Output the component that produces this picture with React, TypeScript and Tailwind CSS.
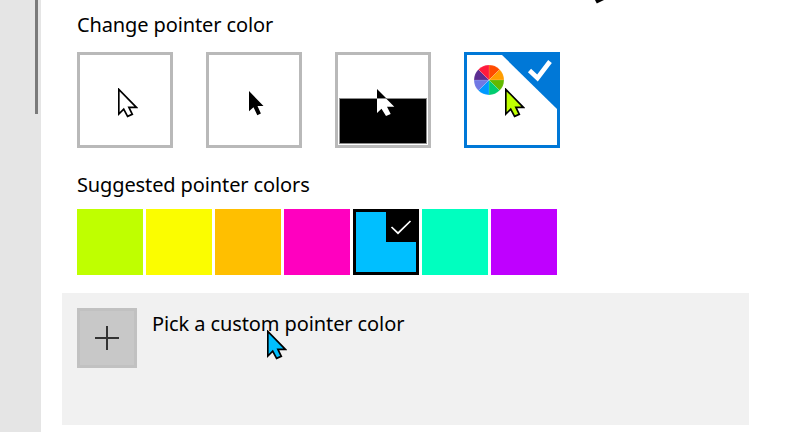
import React, { useState } from 'react';
import clsx from 'clsx';

const OUTLINE_POINTER = 'M.8 1.4V26L5.7 21.2 9.6 28.4 14.3 26.4 10.9 19.4H18.4Z';

const wheelColors = ['#ff4b00', '#ff9d00', '#62b900', '#00cc6f', '#0099ff', '#7078e4', '#5c2d91', '#ff1a3c'];

const swatches = [
  { name: 'Lime', color: 'bg-[#bfff00]' },
  { name: 'Yellow', color: 'bg-[#fbfd00]' },
  { name: 'Gold', color: 'bg-[#ffbf00]' },
  { name: 'Pink', color: 'bg-[#ff00bf]' },
  { name: 'Turquoise', color: 'bg-[#00bfff]' },
  { name: 'Green', color: 'bg-[#00ffbf]' },
  { name: 'Purple', color: 'bg-[#bf00ff]' },
];

interface PointerProps {
  fill: string;
  className?: string;
}

const Pointer: React.FC<PointerProps> = ({ fill, className }) => (
  <svg width="20" height="30" viewBox="0 0 20 30" className={className}>
    <path d={OUTLINE_POINTER} fill={fill} stroke="#000" strokeWidth={1.7} />
  </svg>
);

const ColorWheel = () => (
  <svg width="30" height="30" viewBox="-15 -15 30 30" className="absolute left-[7px] top-[10px]">
    {wheelColors.map((color, i) => (
      <path
        key={color}
        d="M0 0V-15A15 15 0 0 1 10.61 -10.61Z"
        fill={color}
        stroke="#fff"
        strokeOpacity={0.3}
        strokeWidth={0.4}
        transform={`rotate(${i * 45})`}
      />
    ))}
  </svg>
);

const modes = [
  {
    name: 'White',
    preview: <Pointer fill="#fff" className="absolute left-[38px] top-[33px]" />,
  },
  {
    name: 'Black',
    preview: (
      <svg width="16" height="26" viewBox="0 0 16 26" className="absolute left-[40px] top-[36px]">
        <path d="M0 0V20.3L4.5 16.3 8.3 24.2 11.9 22.6 8.5 15H14.5Z" />
      </svg>
    ),
  },
  {
    name: 'Inverted',
    preview: (
      <>
        <div className="absolute left-px top-[43px] h-[46px] w-[88px] border border-[#8c8c8c] bg-black" />
        <svg width="20" height="30" viewBox="0 0 20 30" className="absolute left-[39px] top-[34px]">
          <path d="M0 0V10H10Z" />
          <path d="M0 10V24L4.5 19.7 9 27 13.7 25 10 17.7H17.3L9.6 10Z" fill="#fff" />
          <path d="M0 9.5H9.5" stroke="#8c8c8c" />
        </svg>
      </>
    ),
  },
  {
    name: 'Custom',
    preview: (
      <>
        <ColorWheel />
        <svg width="55" height="54" viewBox="0 0 55 54" className="absolute right-0 top-0">
          <path d="M0 0H55V54Z" fill="#0078d7" />
          <path d="M27.5 15.5 35.5 23 48 6.5" fill="none" stroke="#fff" strokeWidth={4.6} />
        </svg>
        <Pointer fill="#bfff00" className="absolute left-[38px] top-[33px]" />
      </>
    ),
  },
];

export default function App() {
  const [mode, setMode] = useState('Custom');
  const [swatch, setSwatch] = useState('Turquoise');

  return (
    <div className="relative flex h-[432px] w-[796px] overflow-hidden bg-white font-['Noto_Sans','Open_Sans',sans-serif] text-[20px] leading-7 text-black">
      <aside className="flex w-[41px] shrink-0 justify-end bg-[#e5e5e5] pr-[3px]">
        <div className="h-[114px] w-[3px] bg-[#7a7a7a]" />
      </aside>

      <main className="flex-1 pl-[21px]">
        <section className="pl-[15px] pt-[11px]">
          <h2 className="h-7 whitespace-nowrap tracking-[-0.12px]">Change pointer color</h2>
          <div className="mt-[13px] flex gap-[33px]">
            {modes.map((item) => (
              <button
                key={item.name}
                aria-label={item.name}
                onClick={() => setMode(item.name)}
                className={clsx(
                  'relative size-24 border-3 bg-white',
                  mode === item.name ? 'border-[#0078d7]' : 'border-[#b9b9b9]'
                )}
              >
                {item.preview}
              </button>
            ))}
          </div>
        </section>

        <section className="pl-[15px] pt-[23px]">
          <h2 className="h-7 whitespace-nowrap tracking-[-0.12px]">Suggested pointer colors</h2>
          <div className="mt-[10px] flex gap-[3px]">
            {swatches.map((item) => (
              <button
                key={item.name}
                aria-label={item.name}
                onClick={() => setSwatch(item.name)}
                className={clsx('relative size-[66px]', item.color, swatch === item.name && 'border-3 border-black')}
              >
                {swatch === item.name && (
                  <svg width="30" height="30" viewBox="0 0 30 30" className="absolute right-0 top-0 bg-black">
                    <path d="M5.5 15 12 21.2 24.5 9" fill="none" stroke="#fff" strokeWidth={1.7} />
                  </svg>
                )}
              </button>
            ))}
          </div>
        </section>

        <section className="mt-[18px] flex h-[132px] w-[687px] items-start gap-[15px] bg-[#f1f1f1] p-[15px]">
          <button
            aria-label="Add color"
            className="flex size-[60px] items-center justify-center border-3 border-[#c1c1c1] bg-[#c8c8c8]"
          >
            <svg width="24" height="24" viewBox="0 0 24 24">
              <path d="M0 12H24M12 0V24" stroke="#333" strokeWidth={2} />
            </svg>
          </button>
          <span className="mt-[2px] whitespace-nowrap tracking-[-0.1px]">Pick a custom pointer color</span>
        </section>
      </main>

      {/* live pointer, plus the tail of the size preview scrolled off the top */}
      <Pointer fill="#00bfff" className="absolute left-[267px] top-[330px]" />
      <svg width="10" height="4" viewBox="0 0 10 4" className="absolute left-[595px] top-0">
        <path d="M0 0 1.8 3.6 9 0Z" />
      </svg>
    </div>
  );
}
